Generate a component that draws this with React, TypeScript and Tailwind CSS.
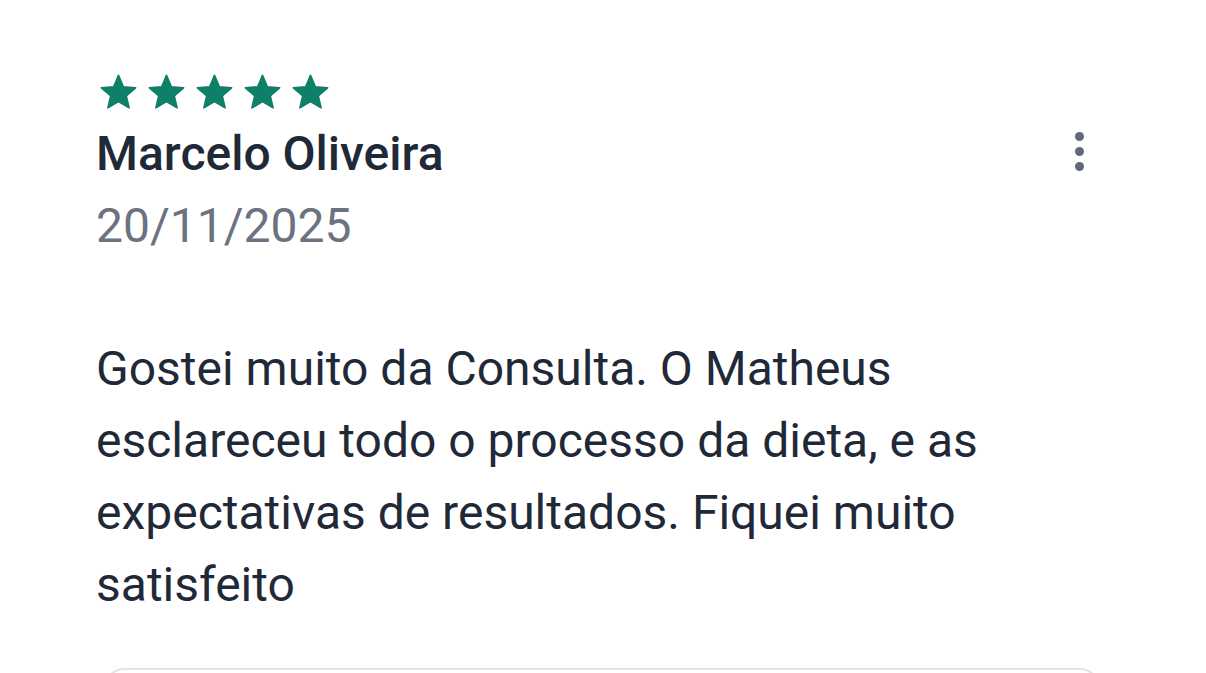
import React from "react";

const Star = () => (
  <svg width="41" height="41" viewBox="0 0 24 24" className="shrink-0">
    <path
      d="M12 17.27L18.18 21l-1.64-7.03L22 9.24l-7.19-.61L12 2 9.19 8.63 2 9.24l5.46 4.73L5.82 21z"
      fill="#0e8068"
      stroke="#0e8068"
      strokeWidth="1"
      strokeLinejoin="round"
    />
  </svg>
);

export default function App() {
  return (
    <div className="w-[1206px] h-[673px] overflow-hidden bg-white font-['Roboto',sans-serif]">
      <div className="pl-[96px] pr-[122px] pt-[72px]">
        <div className="flex justify-between items-start">
          <div className="flex flex-col">
            <div className="flex gap-[7px] ml-[2px]">
              <Star />
              <Star />
              <Star />
              <Star />
              <Star />
            </div>
            <div className="mt-[13px] text-[48px] leading-[56px] font-medium text-[#1f2937]">
              Marcelo Oliveira
            </div>
            <div className="mt-[14px] text-[48px] leading-[60px] text-[#6b7280]">
              20/11/2025
            </div>
          </div>
          <div className="mt-[60px] flex flex-col gap-[6px]">
            <div className="w-[9px] h-[9px] rounded-full bg-[#5f6978]" />
            <div className="w-[9px] h-[9px] rounded-full bg-[#5f6978]" />
            <div className="w-[9px] h-[9px] rounded-full bg-[#5f6978]" />
          </div>
        </div>
        <p className="mt-[77px] text-[48px] leading-[72px] text-[#1f2937]">
          Gostei muito da Consulta. O Matheus esclareceu todo o processo da dieta, e as expectativas de resultados. Fiquei muito satisfeito
        </p>
      </div>
      <div className="mt-[47px] ml-[104px] w-[996px] h-[100px] rounded-[20px] border-2 border-[#e3e3e3]" />
    </div>
  );
}
